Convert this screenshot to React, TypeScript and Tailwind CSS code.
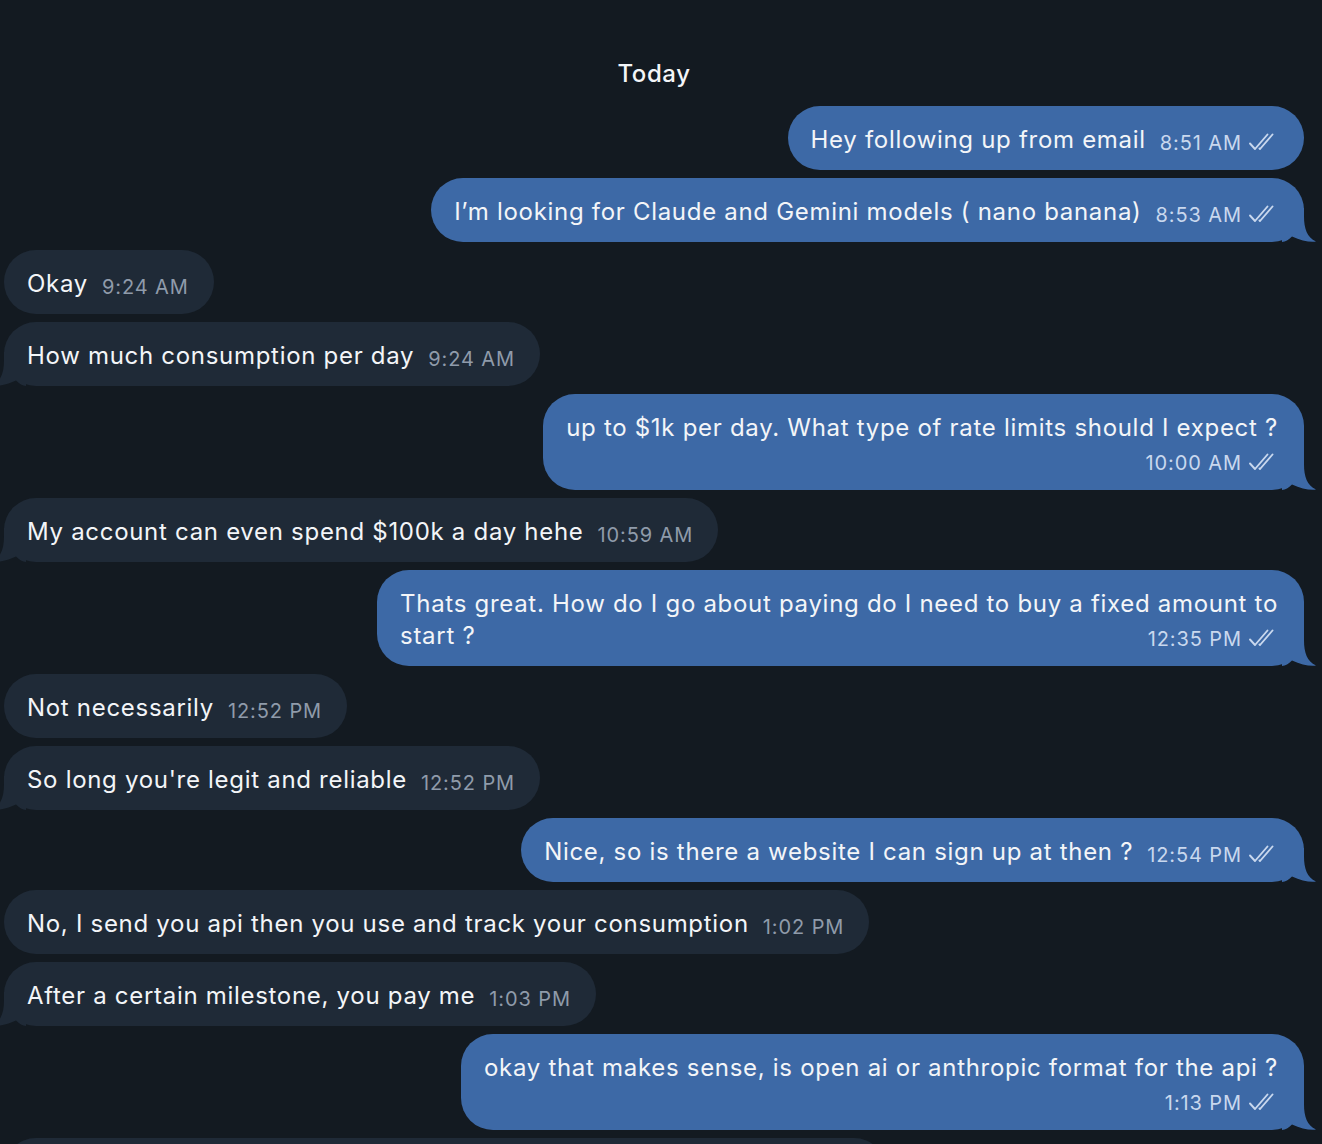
import React from "react";

type Msg = {
  out: boolean;
  text: string;
  time: string;
  tail?: boolean;
  layout?: "inline" | "stacked" | "wrapped";
  line2?: string;
};

const msgs: Msg[] = [
  { out: true, text: "Hey following up from email", time: "8:51 AM" },
  { out: true, text: "I’m looking for Claude and Gemini models ( nano banana)", time: "8:53 AM", tail: true },
  { out: false, text: "Okay", time: "9:24 AM" },
  { out: false, text: "How much consumption per day", time: "9:24 AM", tail: true },
  { out: true, text: "up to $1k per day. What type of rate limits should I expect ?", time: "10:00 AM", tail: true, layout: "stacked" },
  { out: false, text: "My account can even spend $100k a day hehe", time: "10:59 AM", tail: true },
  { out: true, text: "Thats great. How do I go about paying do I need to buy a fixed amount to", line2: "start ?", time: "12:35 PM", tail: true, layout: "wrapped" },
  { out: false, text: "Not necessarily", time: "12:52 PM" },
  { out: false, text: "So long you're legit and reliable", time: "12:52 PM", tail: true },
  { out: true, text: "Nice, so is there a website I can sign up at then ?", time: "12:54 PM", tail: true },
  { out: false, text: "No, I send you api then you use and track your consumption", time: "1:02 PM" },
  { out: false, text: "After a certain milestone, you pay me", time: "1:03 PM", tail: true },
  { out: true, text: "okay that makes sense, is open ai or anthropic format for the api ?", time: "1:13 PM", tail: true, layout: "stacked" },
  { out: false, text: "Yes it works with both formats, so you can use whichever one", time: "1:15 PM" },
];

function Checks() {
  return (
    <svg width="30" height="20" viewBox="0 0 30 20" fill="none" className="ml-[6px] shrink-0 -translate-y-[1px]">
      <path d="M2 11.5 L7 17 L19.5 2.5" stroke="#c9d8ee" strokeWidth="1.9" strokeLinecap="round" strokeLinejoin="round" />
      <path d="M11.5 16.5 L12 17 L24.5 2.5" stroke="#c9d8ee" strokeWidth="1.9" strokeLinecap="round" strokeLinejoin="round" />
    </svg>
  );
}

function Meta({ out, time }: { out: boolean; time: string }) {
  return (
    <span
      className={
        "flex items-center shrink-0 whitespace-nowrap text-[20px] leading-[24px] tracking-[0.9px] translate-y-[3px] " +
        (out ? "text-[#c9d8ee]" : "text-[#8f9baa]")
      }
    >
      {time}
      {out && <Checks />}
    </span>
  );
}

function Tail({ out }: { out: boolean }) {
  if (out) {
    return (
      <svg width="34" height="34" viewBox="0 0 34 34" className="absolute right-[-12px] bottom-0">
        <path
          d="M0 0 H22 V8 C22 21 25 29 34 33.6 C27 34.4 19 32.5 10 28.5 C6.5 31.5 3.5 34 0 34 Z"
          fill="#3d69a6"
        />
      </svg>
    );
  }
  return (
    <svg width="34" height="34" viewBox="0 0 34 34" className="absolute left-[-12px] bottom-0">
      <path
        d="M34 0 H12 V8 C12 21 9 29 0 33.6 C7 34.4 15 32.5 24 28.5 C27.5 31.5 30.5 34 34 34 Z"
        fill="#1f2a37"
      />
    </svg>
  );
}

function Bubble({ m }: { m: Msg }) {
  const layout = m.layout ?? "inline";
  const base =
    "relative rounded-[32px] pl-[23px] text-[24px] leading-[32px] tracking-[0.7px] text-[#f3f5f8] " +
    (m.out ? "bg-[#3d69a6] pr-[26px]" : "bg-[#1f2a37] pr-[25px]");
  return (
    <div className={"flex " + (m.out ? "justify-end pr-[18px]" : "justify-start pl-[4px]")}>
      <div className={base}>
        {m.tail && <Tail out={m.out} />}
        <div className="relative">
          {layout === "inline" && (
            <div className="flex items-center pt-[18px] pb-[14px] whitespace-nowrap">
              <span>{m.text}</span>
              <span className="ml-[14px]">
                <Meta out={m.out} time={m.time} />
              </span>
            </div>
          )}
          {layout === "stacked" && (
            <div className="flex flex-col pt-[18px] pb-[14px]">
              <span className="whitespace-nowrap">{m.text}</span>
              <div className="flex justify-end h-[32px] items-center">
                <Meta out={m.out} time={m.time} />
              </div>
            </div>
          )}
          {layout === "wrapped" && (
            <div className="flex flex-col pt-[18px] pb-[14px]">
              <span className="whitespace-nowrap">{m.text}</span>
              <div className="flex justify-between items-center h-[32px]">
                <span>{m.line2}</span>
                <Meta out={m.out} time={m.time} />
              </div>
            </div>
          )}
        </div>
      </div>
    </div>
  );
}

export default function App() {
  return (
    <div
      className="w-[1322px] h-[1144px] overflow-hidden bg-[#131a21] antialiased"
      style={{ fontFamily: "Inter, 'Noto Sans', sans-serif" }}
    >
      <div className="flex justify-center pt-[58px] pr-[14px] pb-[16px]">
        <span className="text-[24px] leading-[32px] font-medium tracking-[0.6px] text-[#f3f5f8]">Today</span>
      </div>
      <div className="flex flex-col gap-[8px] overflow-hidden">
        {msgs.map((m, i) => (
          <Bubble key={i} m={m} />
        ))}
      </div>
    </div>
  );
}
